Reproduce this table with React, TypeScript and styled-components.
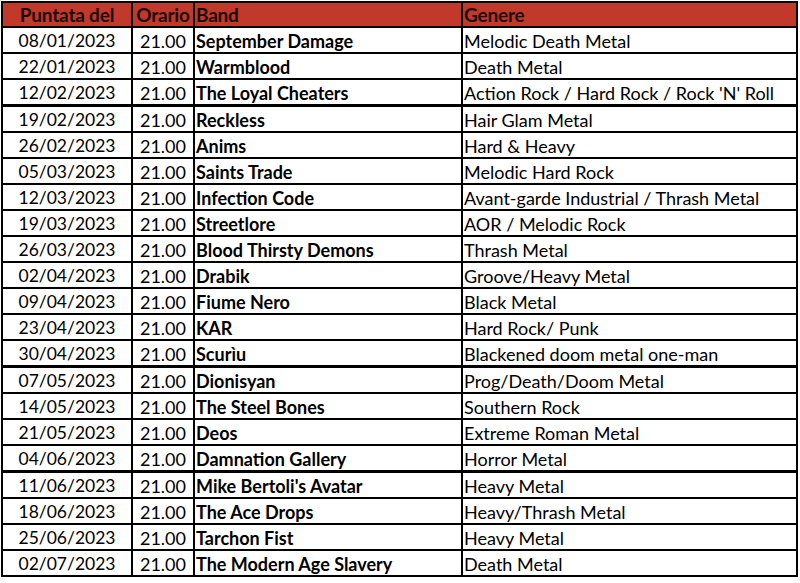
import React from "react";
import styled, { createGlobalStyle } from "styled-components";

const Global = createGlobalStyle`
  html, body { margin: 0; padding: 0; background: #ffffff; }
  body { font-family: Lato, "Noto Sans", sans-serif; color: #000; }
`;

const Page = styled.div`
  padding: 1px 0 0 1px;
  width: 800px;
  box-sizing: border-box;
`;

const Table = styled.table`
  border-collapse: collapse;
  table-layout: fixed;
  width: 795px;
  border: 2px solid #000;
  font-family: Lato, "Noto Sans", sans-serif;
`;

const Head = styled.th<{ $align?: string }>`
  background: #c1392b;
  color: #1b0a08;
  font-weight: 700;
  font-size: 19px;
  letter-spacing: -0.2px;
  height: 23px;
  padding: 0 1px;
  line-height: 23px;
  text-align: ${(p) => p.$align || "left"};
  border: 2px solid #000;
  border-top: none;
  white-space: nowrap;
  overflow: hidden;
`;

const Row = styled.tr<{ $thick?: boolean }>`
  border-bottom: ${(p) => (p.$thick ? "3px" : "2px")} solid #000;
`;

const Cell = styled.td<{ $align?: string; $bold?: boolean; $size?: number }>`
  box-sizing: border-box;
  height: 25px;
  padding: 2px 1px 0;
  font-size: ${(p) => p.$size || 18}px;
  line-height: 22px;
  vertical-align: top;
  font-weight: ${(p) => (p.$bold ? 700 : 400)};
  text-align: ${(p) => p.$align || "left"};
  border-left: 2px solid #000;
  border-right: 2px solid #000;
  white-space: nowrap;
  overflow: hidden;
`;

const rows: [string, string, string, boolean?][] = [
  ["08/01/2023", "September Damage", "Melodic Death Metal"],
  ["22/01/2023", "Warmblood", "Death Metal"],
  ["12/02/2023", "The Loyal Cheaters", "Action Rock / Hard Rock / Rock 'N' Roll", true],
  ["19/02/2023", "Reckless", "Hair Glam Metal"],
  ["26/02/2023", "Anims", "Hard & Heavy"],
  ["05/03/2023", "Saints Trade", "Melodic Hard Rock"],
  ["12/03/2023", "Infection Code", "Avant-garde Industrial / Thrash Metal"],
  ["19/03/2023", "Streetlore", "AOR / Melodic Rock"],
  ["26/03/2023", "Blood Thirsty Demons", "Thrash Metal"],
  ["02/04/2023", "Drabik", "Groove/Heavy Metal"],
  ["09/04/2023", "Fiume Nero", "Black Metal"],
  ["23/04/2023", "KAR", "Hard Rock/ Punk"],
  ["30/04/2023", "Scurìu", "Blackened doom metal one-man", true],
  ["07/05/2023", "Dionisyan", "Prog/Death/Doom Metal"],
  ["14/05/2023", "The Steel Bones", "Southern Rock"],
  ["21/05/2023", "Deos", "Extreme Roman Metal"],
  ["04/06/2023", "Damnation Gallery", "Horror Metal", true],
  ["11/06/2023", "Mike Bertoli's Avatar", "Heavy Metal"],
  ["18/06/2023", "The Ace Drops", "Heavy/Thrash Metal"],
  ["25/06/2023", "Tarchon Fist", "Heavy Metal"],
  ["02/07/2023", "The Modern Age Slavery", "Death Metal"],
];

export default function App() {
  return (
    <>
      <Global />
      <Page>
        <Table>
          <colgroup>
            <col style={{ width: 130 }} />
            <col style={{ width: 62 }} />
            <col style={{ width: 268 }} />
            <col style={{ width: 335 }} />
          </colgroup>
          <thead>
            <tr>
              <Head $align="center">Puntata del</Head>
              <Head $align="center">Orario</Head>
              <Head>Band</Head>
              <Head>Genere</Head>
            </tr>
          </thead>
          <tbody>
            {rows.map(([date, band, genre, thick]) => (
              <Row key={date} $thick={thick}>
                <Cell $align="center" $size={17.5}>{date}</Cell>
                <Cell $align="center">21.00</Cell>
                <Cell $bold>{band}</Cell>
                <Cell>{genre}</Cell>
              </Row>
            ))}
          </tbody>
        </Table>
      </Page>
    </>
  );
}
